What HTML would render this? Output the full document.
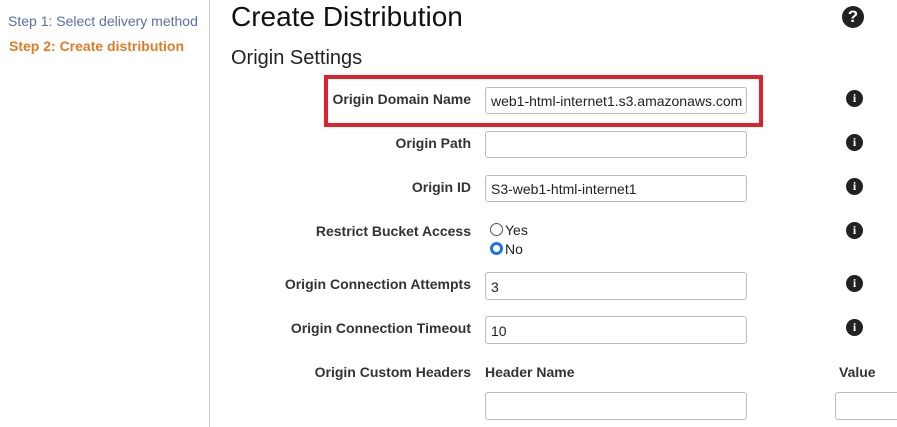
<!DOCTYPE html>
<html><head><style>
body{margin:0;width:897px;height:427px;overflow:hidden;background:#fff;font-family:"Liberation Sans",Arial,sans-serif;position:relative}
.a{position:absolute;white-space:nowrap}
.l{position:absolute;right:426px;font-size:14px;font-weight:bold;color:#333;white-space:nowrap}
.in{position:absolute;left:485px;width:262px;height:27px;border:1px solid #bbb;border-radius:3px;box-sizing:border-box;font-size:14px;color:#222;padding:5px 0 0 5px}
.i{position:absolute;left:846px;width:17px;height:17px;border-radius:50%;background:#222;color:#fff;font:bold 12px "Liberation Serif",serif;text-align:center;line-height:17px}
.r{position:absolute;left:490px;width:13px;height:13px;border-radius:50%;border:1px solid #555;box-sizing:border-box}
</style></head><body>
<div class="a" style="left:8px;top:13px;font-size:14px;color:#5a6fa8">Step 1: Select delivery method</div>
<div class="a" style="left:9px;top:38px;font-size:14px;font-weight:bold;color:#e07b26">Step 2: Create distribution</div>
<div class="a" style="left:209px;top:0;width:1px;height:427px;background:#ccc"></div>
<div class="a" style="left:231px;top:1px;font-size:28px;color:#111">Create Distribution</div>
<div class="a" style="left:231px;top:47px;font-size:20px;color:#222">Origin Settings</div>
<div class="a" style="left:842px;top:6px;width:22px;height:22px;border-radius:50%;background:#222;color:#fff;font:bold 17px/22px 'Liberation Sans';text-align:center">?</div>
<div class="a" style="left:324px;top:75px;width:439px;height:52px;border:4px solid #e0202a;box-sizing:border-box"></div>
<div class="l" style="top:91px">Origin Domain Name</div>
<div class="in" style="top:87px">web1-html-internet1.s3.amazonaws.com</div>
<div class="i" style="top:90px">i</div>
<div class="l" style="top:135px">Origin Path</div>
<div class="in" style="top:131px"></div>
<div class="i" style="top:134px">i</div>
<div class="l" style="top:179px">Origin ID</div>
<div class="in" style="top:175px">S3-web1-html-internet1</div>
<div class="i" style="top:178px">i</div>
<div class="l" style="top:223px">Restrict Bucket Access</div>
<div class="r" style="top:223px"></div>
<div class="a" style="left:505px;top:222px;font-size:14px;color:#222">Yes</div>
<div class="r" style="top:242px;border:3px solid #1a73e8;background:#fff"></div>
<div class="a" style="left:505px;top:241px;font-size:14px;color:#222">No</div>
<div class="i" style="top:222px">i</div>
<div class="l" style="top:276px">Origin Connection Attempts</div>
<div class="in" style="top:272px;height:28px;padding-top:6px">3</div>
<div class="i" style="top:275px">i</div>
<div class="l" style="top:320px">Origin Connection Timeout</div>
<div class="in" style="top:316px;height:28px;padding-top:6px">10</div>
<div class="i" style="top:319px">i</div>
<div class="l" style="top:364px">Origin Custom Headers</div>
<div class="a" style="left:485px;top:364px;font-size:14px;font-weight:bold;color:#333">Header Name</div>
<div class="a" style="left:839px;top:364px;font-size:14px;font-weight:bold;color:#333">Value</div>
<div class="in" style="top:392px;height:28px"></div>
<div class="in" style="top:392px;height:28px;left:835px;width:80px"></div>
</body></html>
